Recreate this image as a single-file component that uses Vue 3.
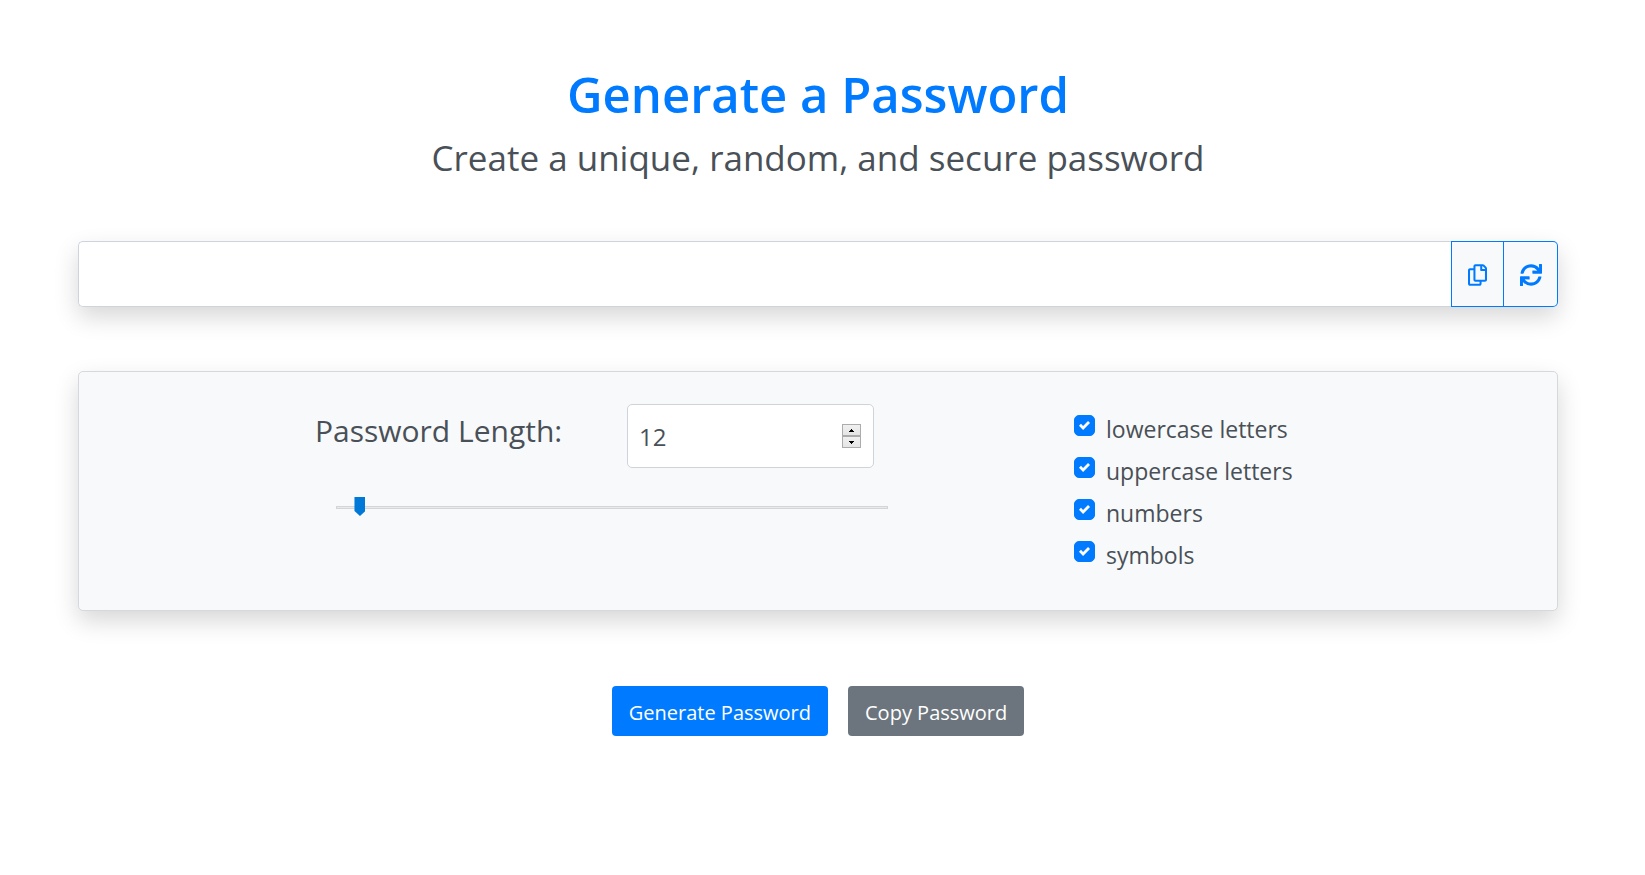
<script setup>
import { ref, reactive } from 'vue'

const password = ref('')
const length = ref(12)
const min = 5
const max = 210

const options = reactive([
  { id: 'lowercase', label: 'lowercase letters', chars: 'abcdefghijklmnopqrstuvwxyz', on: true },
  { id: 'uppercase', label: 'uppercase letters', chars: 'ABCDEFGHIJKLMNOPQRSTUVWXYZ', on: true },
  { id: 'numbers', label: 'numbers', chars: '0123456789', on: true },
  { id: 'symbols', label: 'symbols', chars: '!@#$%^&*()-_=+[]{};:,.?', on: true },
])

function step(by) {
  length.value = Math.min(max, Math.max(min, Number(length.value) + by))
}

function generate() {
  const pool = options.filter((o) => o.on).map((o) => o.chars).join('')
  if (!pool) return
  const values = crypto.getRandomValues(new Uint32Array(Number(length.value)))
  password.value = Array.from(values, (v) => pool[v % pool.length]).join('')
}

function copy() {
  navigator.clipboard?.writeText(password.value)
}
</script>

<template>
  <main class="page">
    <header class="heading">
      <h1>Generate a Password</h1>
      <p>Create a unique, random, and secure password</p>
    </header>

    <div class="output">
      <input v-model="password" class="output-text" type="text" aria-label="Generated password" />
      <button class="icon-button" type="button" aria-label="Copy" @click="copy">
        <svg class="icon-copy" viewBox="0 0 448 512" aria-hidden="true">
          <path d="M433.941 65.941l-51.882-51.882A48 48 0 0 0 348.118 0H176c-26.51 0-48 21.49-48 48v48H48c-26.51 0-48 21.49-48 48v320c0 26.51 21.49 48 48 48h224c26.51 0 48-21.49 48-48v-48h80c26.51 0 48-21.49 48-48V99.882a48 48 0 0 0-14.059-33.941zM266 464H54a6 6 0 0 1-6-6V150a6 6 0 0 1 6-6h74v224c0 26.51 21.49 48 48 48h96v42a6 6 0 0 1-6 6zm128-96H182a6 6 0 0 1-6-6V54a6 6 0 0 1 6-6h106v88c0 13.255 10.745 24 24 24h88v202a6 6 0 0 1-6 6zm6-256h-64V48h9.632c1.591 0 3.117.632 4.243 1.757l48.368 48.368a6 6 0 0 1 1.757 4.243V112z" />
        </svg>
      </button>
      <button class="icon-button last" type="button" aria-label="Regenerate" @click="generate">
        <svg class="icon-sync" viewBox="0 0 512 512" aria-hidden="true">
          <path d="M440.65 12.57l4 82.77A247.16 247.16 0 0 0 255.83 8C134.73 8 33.91 94.92 12.29 209.82A12 12 0 0 0 24.09 224h49.05a12 12 0 0 0 11.67-9.26 175.91 175.91 0 0 1 317-56.94l-101.46-4.86a12 12 0 0 0-12.57 12v47.41a12 12 0 0 0 12 12H500a12 12 0 0 0 12-12V12a12 12 0 0 0-12-12h-47.37a12 12 0 0 0-11.98 12.57zM255.83 432a175.61 175.61 0 0 1-146-77.8l101.8 4.87a12 12 0 0 0 12.57-12v-47.4a12 12 0 0 0-12-12H12a12 12 0 0 0-12 12V500a12 12 0 0 0 12 12h47.35a12 12 0 0 0 12-12.6l-4.15-82.57A247.17 247.17 0 0 0 255.83 504c121.11 0 221.93-86.92 243.55-201.82a12 12 0 0 0-11.8-14.18h-49.05a12 12 0 0 0-11.67 9.26A175.86 175.86 0 0 1 255.83 432z" />
        </svg>
      </button>
    </div>

    <section class="card">
      <div class="length">
        <label class="length-label" for="length">Password Length:</label>
        <div class="number">
          <input id="length" v-model="length" type="number" :min="min" :max="max" />
          <div class="spinner">
            <button type="button" aria-label="Increase" @click="step(1)">
              <svg viewBox="0 0 5 3" aria-hidden="true"><path d="M2 0h1v1h1v1h1v1H0V2h1V1h1z" /></svg>
            </button>
            <button type="button" aria-label="Decrease" @click="step(-1)">
              <svg viewBox="0 0 5 3" aria-hidden="true"><path d="M0 0h5v1H4v1H3v1H2V2H1V1H0z" /></svg>
            </button>
          </div>
        </div>
        <input v-model="length" class="slider" type="range" :min="min" :max="max" aria-label="Password length" />
      </div>

      <div class="options">
        <label v-for="option in options" :key="option.id" class="option" :for="option.id">
          <span class="box">
            <input :id="option.id" v-model="option.on" type="checkbox" />
            <svg v-if="option.on" viewBox="0 0 8 8" aria-hidden="true">
              <path d="M6.564.75l-3.59 3.612-1.538-1.55L0 4.26 2.974 7.25 8 2.193z" />
            </svg>
          </span>
          <span>{{ option.label }}</span>
        </label>
      </div>
    </section>

    <div class="actions">
      <button class="action primary" type="button" @click="generate">Generate Password</button>
      <button class="action secondary" type="button" @click="copy">Copy Password</button>
    </div>
  </main>
</template>

<style>
body {
  background: #fff;
}
</style>

<style scoped>
* {
  box-sizing: border-box;
}

.page {
  padding: 62px 87px 64px 78px;
  font-family: "Open Sans", "Noto Sans", sans-serif;
  color: #495057;
}

button,
input {
  font-family: inherit;
  color: inherit;
}

.heading {
  text-align: center;
}

h1 {
  margin: 0;
  font-size: 49px;
  line-height: 64px;
  font-weight: 600;
  color: #007bff;
}

p {
  margin: 0;
  font-size: 35px;
  line-height: 64px;
}

.output {
  display: flex;
  height: 66px;
  margin-top: 51px;
  border-radius: 5px;
  box-shadow: 0 10px 24px rgba(0, 0, 0, 0.16);
}

.output-text {
  flex: 1;
  min-width: 0;
  padding: 0 12px;
  border: 1px solid #ced4da;
  border-right: 0;
  border-radius: 5px 0 0 5px;
  background: #fff;
  font-size: 24px;
}

.icon-button {
  display: flex;
  align-items: center;
  justify-content: center;
  width: 53px;
  padding: 2px 0 0;
  border: 1px solid #007bff;
  background: #f8f9fa;
}

.icon-button.last {
  width: 54px;
  border-left: 0;
  border-radius: 0 5px 5px 0;
}

.icon-button svg {
  height: 22px;
  fill: #007bff;
}

.icon-copy {
  width: 19px;
}

.icon-sync {
  width: 22px;
}

.card {
  display: grid;
  grid-template-columns: 236fr 759fr 483fr;
  height: 240px;
  margin-top: 64px;
  border: 1px solid #d6d9dc;
  border-radius: 5px;
  background: #f8f9fa;
  box-shadow: 0 10px 24px rgba(0, 0, 0, 0.16);
}

.length {
  grid-column: 2;
  display: grid;
  grid-template-columns: 312fr 247fr 200fr;
  grid-template-rows: 64px auto;
  align-content: start;
  row-gap: 30px;
  padding-top: 32px;
}

.length-label {
  font-size: 30px;
  line-height: 54px;
}

.number {
  display: flex;
  align-items: center;
  padding: 2px 12px 0 11px;
  border: 1px solid #ced4da;
  border-radius: 5px;
  background: #fff;
}

.number input {
  flex: 1;
  min-width: 0;
  padding: 0;
  border: 0;
  outline: 0;
  background: none;
  font-size: 24px;
  line-height: 36px;
  appearance: textfield;
}

.number input::-webkit-inner-spin-button {
  appearance: none;
  margin: 0;
}

.spinner {
  display: flex;
  flex-direction: column;
  width: 19px;
  margin-bottom: 2px;
}

.spinner button {
  display: flex;
  align-items: center;
  justify-content: center;
  height: 12px;
  padding: 0;
  border: 1px solid #acacac;
  background: linear-gradient(#f0f0f0, #e5e5e5);
}

.spinner svg {
  width: 5px;
  height: 3px;
  fill: #000;
}

.slider {
  grid-column: 1 / -1;
  width: 552px;
  max-width: 100%;
  height: 19px;
  margin: 0 0 0 21px;
  appearance: none;
  background: none;
}

.slider::-webkit-slider-runnable-track {
  height: 3px;
  box-shadow: inset 0 0 0 1px #d3d5d7;
  background: #e7eaea;
}

.slider::-webkit-slider-thumb {
  appearance: none;
  width: 11px;
  height: 19px;
  margin-top: -9px;
  background: #0078d7;
  clip-path: polygon(0 0, 100% 0, 100% 74%, 50% 100%, 0 74%);
}

.options {
  grid-column: 3;
  padding-top: 36px;
}

.option {
  display: flex;
  align-items: flex-start;
  gap: 11px;
  font-size: 23px;
  line-height: 42px;
}

.box {
  position: relative;
  display: flex;
  width: 21px;
  height: 21px;
  margin-top: 7px;
}

.box input {
  width: 21px;
  height: 21px;
  margin: 0;
  border: 1px solid #adb5bd;
  border-radius: 5px;
  background: #fff;
  appearance: none;
}

.box input:checked {
  border-color: #007bff;
  background: #007bff;
}

.box svg {
  position: absolute;
  top: 5px;
  left: 5px;
  width: 11px;
  height: 11px;
  fill: #fff;
  pointer-events: none;
}

.actions {
  display: flex;
  justify-content: center;
  gap: 20px;
  margin-top: 75px;
}

.action {
  height: 50px;
  padding: 2px 17px 0;
  border: 0;
  border-radius: 4px;
  font-size: 20px;
  color: #fff;
}

.primary {
  background: #007bff;
}

.secondary {
  background: #6c757d;
}
</style>
